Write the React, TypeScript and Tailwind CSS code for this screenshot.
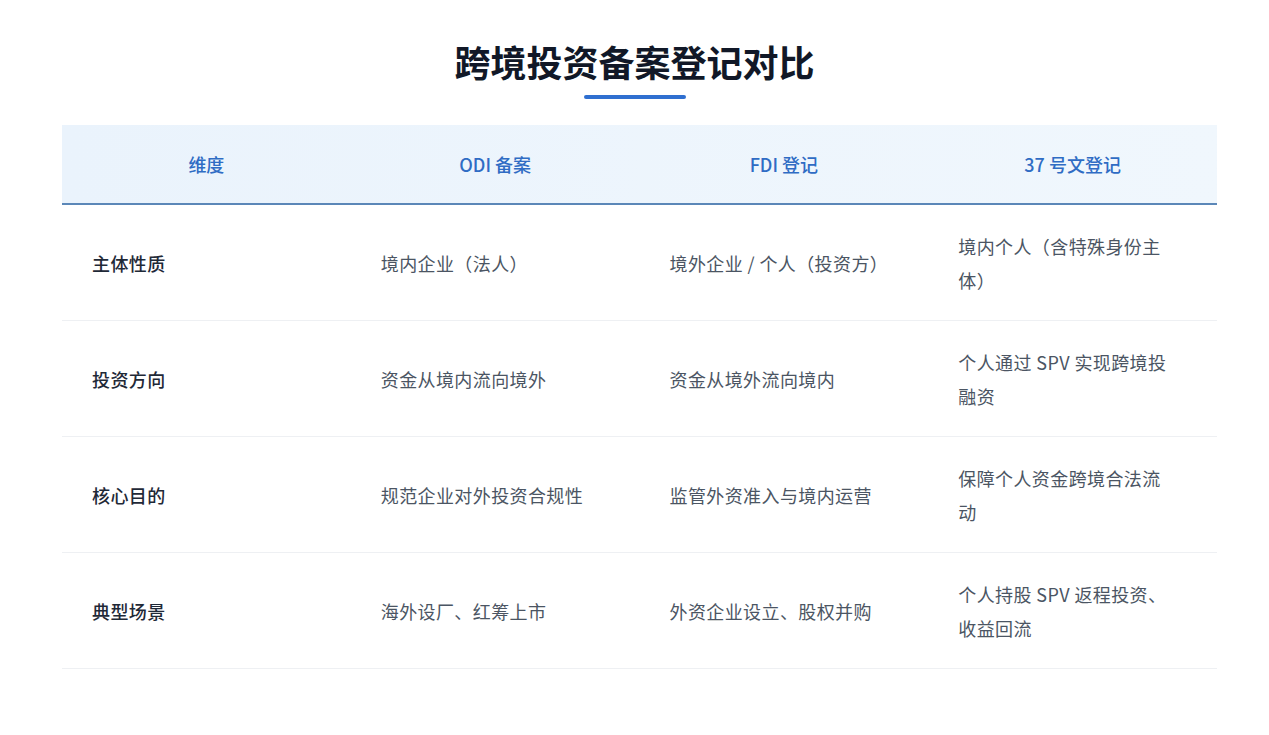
export default function App() {
  const rows = [
    ["主体性质", "境内企业（法人）", "境外企业 / 个人（投资方）", "境内个人（含特殊身份主体）"],
    ["投资方向", "资金从境内流向境外", "资金从境外流向境内", "个人通过 SPV 实现跨境投融资"],
    ["核心目的", "规范企业对外投资合规性", "监管外资准入与境内运营", "保障个人资金跨境合法流动"],
    ["典型场景", "海外设厂、红筹上市", "外资企业设立、股权并购", "个人持股 SPV 返程投资、收益回流"],
  ];
  const heads = ["维度", "ODI 备案", "FDI 登记", "37 号文登记"];
  return (
    <div className="w-[1269px] h-[735px] bg-white" style={{ fontFamily: '"Noto Sans CJK SC", "Noto Sans", sans-serif' }}>
      <div className="flex flex-col items-center pt-[36px]">
        <h1 className="text-[36px] leading-[50px] font-bold text-[#111827]">跨境投资备案登记对比</h1>
        <div className="mt-[9px] w-[102px] h-[4px] rounded-full bg-[#2f6fd0]"></div>
      </div>
      <div className="mx-[62px] mt-[26px] w-[1155px]">
        <div className="grid grid-cols-4 h-[80px] bg-gradient-to-r from-[#eaf3fc] to-[#f0f7fd] border-b-2 border-[#5b87b8]">
          {heads.map((h) => (
            <div key={h} className="flex items-center justify-center text-[18px] text-[#2f6cc4] font-medium">{h}</div>
          ))}
        </div>
        {rows.map((r, i) => (
          <div key={i} className="grid grid-cols-4 h-[116px] border-b border-[#eef0f3]">
            {r.map((c, j) => (
              <div key={j} className={`flex items-center pl-[30px] pr-[40px] text-[18px] leading-[34px] tracking-[0.4px] ${j === 0 ? "text-[#1f2937] font-medium" : "text-[#4b5563]"}`}>{c}</div>
            ))}
          </div>
        ))}
      </div>
    </div>
  );
}
